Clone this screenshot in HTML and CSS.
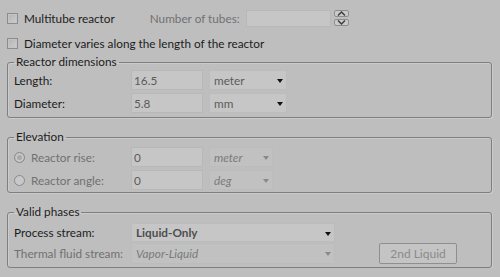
FILE: index.html
```html
<!DOCTYPE html>
<html lang="en">

<head>
    <meta charset="UTF-8">
    <meta name="viewport" content="width=device-width, initial-scale=1.0">
    <title>Reactor geometry</title>
    <link rel="stylesheet" href="styles.css">
</head>

<body>
    <div class="panel">
        <div class="row row-tubes">
            <label class="check"><span class="box"></span>Multitube reactor</label>
            <span class="tubes-label muted">Number of tubes:</span>
            <span class="field spin-field"></span>
            <span class="spin-btns">
                <span class="spin-btn">
                    <svg width="9" height="5" viewBox="0 0 9 5"><path d="M1 4.5 L4.5 1 L8 4.5" fill="none" stroke="#3a3a3a" stroke-width="1.4"/></svg>
                </span>
                <span class="spin-btn">
                    <svg width="9" height="5" viewBox="0 0 9 5"><path d="M1 0.5 L4.5 4 L8 0.5" fill="none" stroke="#3a3a3a" stroke-width="1.4"/></svg>
                </span>
            </span>
        </div>
        <div class="row row-diameter">
            <label class="check"><span class="box"></span>Diameter varies along the length of the reactor</label>
        </div>

        <fieldset class="group group-dims">
            <legend>Reactor dimensions</legend>
            <div class="frow">
                <span class="flabel">Length:</span>
                <span class="field value">16.5</span>
                <span class="select unit">meter<span class="arrow"></span></span>
            </div>
            <div class="frow">
                <span class="flabel">Diameter:</span>
                <span class="field value">5.8</span>
                <span class="select unit">mm<span class="arrow"></span></span>
            </div>
        </fieldset>

        <fieldset class="group group-elev">
            <legend>Elevation</legend>
            <div class="frow">
                <span class="flabel muted"><span class="radio checked"></span>Reactor rise:</span>
                <span class="field value muted">0</span>
                <span class="select unit-small disabled">meter<span class="arrow"></span></span>
            </div>
            <div class="frow">
                <span class="flabel muted"><span class="radio"></span>Reactor angle:</span>
                <span class="field value muted">0</span>
                <span class="select unit-small disabled">deg<span class="arrow"></span></span>
            </div>
        </fieldset>

        <fieldset class="group group-phases">
            <legend>Valid phases</legend>
            <div class="frow frow-process">
                <span class="flabel">Process stream:</span>
                <span class="select phase">Liquid-Only<span class="arrow"></span></span>
            </div>
            <div class="frow frow-thermal">
                <span class="flabel muted">Thermal fluid stream:</span>
                <span class="select phase disabled">Vapor-Liquid<span class="arrow"></span></span>
                <button class="btn" disabled>2nd Liquid</button>
            </div>
        </fieldset>
    </div>
</body>

</html>
```

FILE: styles.css
```css
/* Reactor geometry panel */
body {
    margin: 0;
    background: #bebebe;
    font-family: Lato, 'Liberation Sans', sans-serif;
    font-size: 11.75px;
    color: #1c1c1c;
}

.panel {
    padding: 9px 8px 0 7px;
}

.row {
    display: flex;
    align-items: center;
}

.row-tubes {
    height: 18px;
}

.row-diameter {
    height: 16px;
    margin-top: 8px;
}

.muted {
    color: #717171;
}

.check {
    display: flex;
    align-items: center;
}

.box {
    width: 9px;
    height: 9px;
    border: 1px solid #8c8c8c;
    background: linear-gradient(135deg, #b4b4b4, #cdcdcd);
    box-shadow: inset 0 0 0 1px #c4c4c4;
    margin-right: 6px;
}

.tubes-label {
    margin-left: 35px;
}

.field {
    box-sizing: border-box;
    background: #c6c6c6;
    border: 1px solid #b8b8b8;
    display: flex;
    align-items: center;
}

.spin-field {
    width: 85px;
    height: 17px;
    margin-left: 6px;
}

.spin-btns {
    display: flex;
    flex-direction: column;
    gap: 2px;
    margin-left: 3px;
}

.spin-btn {
    box-sizing: border-box;
    width: 15px;
    height: 7px;
    border: 1px solid #8e8e8e;
    border-radius: 2px;
    background: #cacaca;
    display: flex;
    align-items: center;
    justify-content: center;
}

.spin-btn svg {
    display: block;
}

/* group boxes */
.group {
    margin: 0;
    border: 1px solid #7f7f7f;
    border-radius: 3px;
    box-shadow: inset 1px 1px 0 #cbcbcb, 1px 1px 0 #cbcbcb;
    padding: 2px 6px 4px;
}

.group legend {
    padding: 0 2px;
    line-height: 12px;
    color: #1c1c1c;
}

.group-dims {
    margin-top: 5px;
}

.group-elev {
    margin-top: 13px;
    padding: 4px 6px 2px;
}

.group-phases {
    margin-top: 13px;
    padding: 5px 6px 3px;
}

.frow {
    display: flex;
    align-items: center;
    height: 20px;
}

.frow + .frow {
    margin-top: 3px;
}

.group-phases .frow-process {
    height: 19px;
}

.group-phases .frow + .frow {
    margin-top: 1px;
    height: 21px;
}

.flabel {
    width: 117px;
    display: flex;
    align-items: center;
    flex-shrink: 0;
}

.value {
    width: 72px;
    height: 20px;
    padding-left: 2px;
    color: #5b5b5b;
}

.select {
    position: relative;
    box-sizing: border-box;
    height: 20px;
    display: flex;
    align-items: center;
    padding-left: 4px;
    background: #c6c6c6;
    border: 1px solid #bcbcbc;
    color: #5b5b5b;
}

.select .arrow {
    position: absolute;
    right: 3px;
    top: 8px;
    width: 0;
    height: 0;
    border-left: 3px solid transparent;
    border-right: 3px solid transparent;
    border-top: 4px solid #111;
}

.select.disabled {
    background: #c1c1c1;
    color: #7a7a7a;
    font-style: italic;
}

.select.disabled .arrow {
    border-top-color: #8a8a8a;
}

.unit {
    width: 78px;
    margin-left: 6px;
}

.unit-small {
    width: 64px;
    margin-left: 6px;
}

.phase {
    width: 204px;
    height: 100%;
}

.frow-process .phase {
    font-weight: 700;
    color: #4e4e4e;
}

.radio {
    box-sizing: border-box;
    width: 11px;
    height: 11px;
    border: 1px solid #8a8a8a;
    border-radius: 50%;
    background: #c8c8c8;
    margin-right: 6px;
}

.radio.checked {
    box-shadow: inset 0 0 0 2px #c8c8c8;
    background: #a9a9a9;
}

.btn {
    margin-left: 44px;
    width: 78px;
    height: 21px;
    border: 1px solid #8f8f8f;
    border-radius: 2px;
    background: #c4c4c4;
    font-family: inherit;
    font-size: 12px;
    color: #8a8a8a;
    padding: 0;
}
```
